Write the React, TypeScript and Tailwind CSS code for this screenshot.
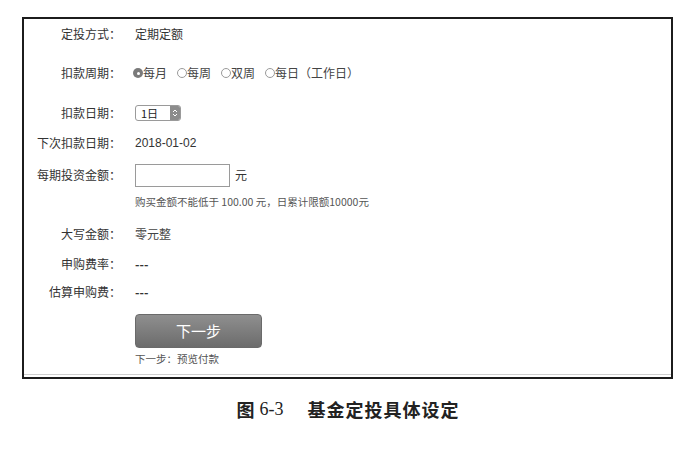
import React from "react";

const CJK = { fontFamily: '"Noto Sans CJK SC", "Liberation Sans", sans-serif' };

function Row({
  label,
  children,
  className = "",
}: {
  label?: string;
  children?: React.ReactNode;
  className?: string;
}) {
  return (
    <div className={`flex items-center ${className}`}>
      <div className="w-[97px] shrink-0 text-right text-[12px] text-[#333]">{label}</div>
      <div className="ml-[14px] flex items-center text-[12px] text-[#333]">{children}</div>
    </div>
  );
}

function Radio({ checked, text }: { checked?: boolean; text: string }) {
  return (
    <label className="flex items-center">
      {checked ? (
        <span className="flex h-[10px] w-[10px] items-center justify-center rounded-full bg-[#7a7a7a]">
          <span className="h-[3px] w-[3px] rounded-full bg-white" />
        </span>
      ) : (
        <span className="h-[10px] w-[10px] rounded-full border border-[#9a9a9a] bg-white" />
      )}
      <span className="text-[#444]">{text}</span>
    </label>
  );
}

export default function App() {
  const cycles = ["每月", "每周", "双周", "每日（工作日）"];

  return (
    <div className="h-[465px] w-[690px] bg-white" style={CJK}>
      <div className="pl-[22px] pt-[17px]">
        <div className="flex h-[362px] w-[651px] flex-col border-2 border-[#1c1c1c]">
          <Row label="定投方式：" className="h-[30px]">
            <span>定期定额</span>
          </Row>

          <Row label="扣款周期：" className="mt-[9px] h-[30px]">
            <div className="-ml-[2px] flex items-center gap-[10px]">
              {cycles.map((c, i) => (
                <Radio key={c} text={c} checked={i === 0} />
              ))}
            </div>
          </Row>

          <Row label="扣款日期：" className="mt-[10px] h-[30px]">
            <div className="flex h-[16px] w-[46px] items-center overflow-hidden rounded-[3px] border border-[#9a9a9a] bg-white">
              <span className="flex-1 pl-[5px] text-[11px] leading-none text-[#222]">1日</span>
              <span className="flex h-full w-[10px] flex-col items-center justify-center bg-[#8c8c8c]">
                <svg width="6" height="10" viewBox="0 0 6 10" fill="none" stroke="white" strokeWidth="1">
                  <path d="M1 4 L3 2 L5 4" />
                  <path d="M1 6 L3 8 L5 6" />
                </svg>
              </span>
            </div>
          </Row>

          <Row label="下次扣款日期：" className="h-[30px]">
            <span style={{ fontFamily: '"Liberation Sans", "Noto Sans CJK SC", sans-serif' }}>2018-01-02</span>
          </Row>

          <Row label="每期投资金额：" className="mt-[5px] h-[24px]">
            <div className="h-[23px] w-[95px] border border-[#9a9a9a] bg-white" />
            <span className="ml-[5px]">元</span>
          </Row>

          <Row className="h-[30px]">
            <span className="text-[10.5px] text-[#555]">
              购买金额不能低于 100.00 元，日累计限额10000元
            </span>
          </Row>

          <Row label="大写金额：" className="mt-[2px] h-[30px]">
            <span className="text-[#444]">零元整</span>
          </Row>

          <Row label="申购费率：" className="h-[30px]">
            <span className="font-bold">---</span>
          </Row>

          <Row label="估算申购费：" className="h-[26px]">
            <span className="font-bold">---</span>
          </Row>

          <Row className="mt-[9px]">
            <button className="flex h-[34px] w-[127px] items-center justify-center rounded-[4px] border border-[#6a6a6a] bg-gradient-to-b from-[#8f8f8f] to-[#6c6c6c] text-[15px] text-white">
              下一步
            </button>
          </Row>

          <Row className="mt-[3px] h-[16px]">
            <span className="text-[10.5px] text-[#555]">下一步：预览付款</span>
          </Row>

          <div className="mt-[7px] h-[1px] w-full bg-[#cfcfcf]" />
        </div>
      </div>

      {/* figure caption */}
      <div className="mt-[17px] flex items-center justify-center pl-[6px] text-[18px] font-bold text-[#222]">
        <span>图</span>
        <span className="ml-[5px] font-normal" style={{ fontFamily: '"Liberation Serif", serif' }}>
          6-3
        </span>
        <span className="ml-[24px] tracking-[1px]">基金定投具体设定</span>
      </div>
    </div>
  );
}
